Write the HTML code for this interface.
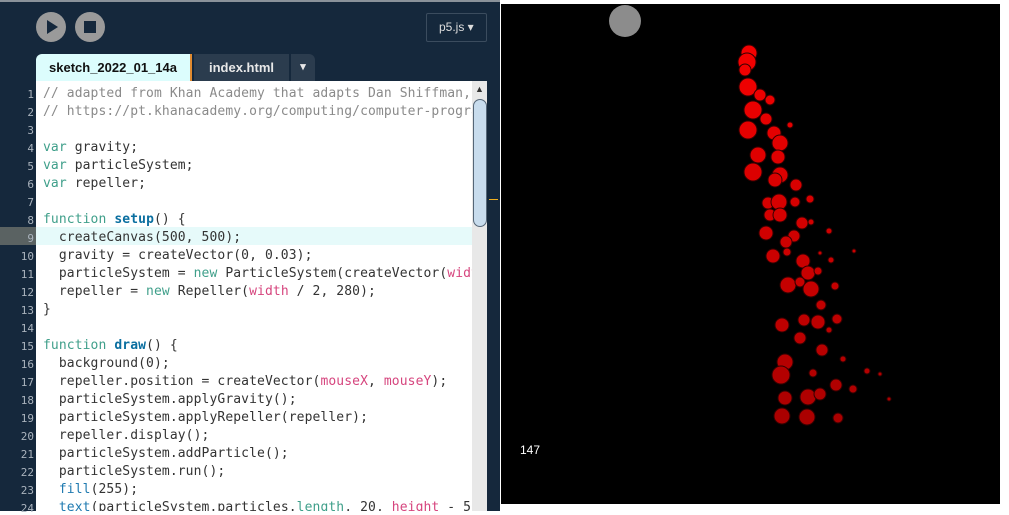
<!DOCTYPE html>
<html><head><meta charset="utf-8"><style>
*{margin:0;padding:0;box-sizing:border-box}
body{width:1009px;height:511px;overflow:hidden;background:#fff;position:relative;font-family:"Liberation Sans",sans-serif}
#ed{position:absolute;left:0;top:0;width:500px;height:511px;background:#15283c}
#topline{position:absolute;left:0;top:0;width:500px;height:2px;background:#8a929a}
.btn{position:absolute;top:12px;width:30px;height:30px;border-radius:50%;background:#9a9a9a}
#sel{position:absolute;left:426px;top:13px;width:61px;height:29px;border:1px solid #3b4c5e;border-radius:2px;color:#ddd;font-size:12px;line-height:27px;padding-left:12px}
.tab{position:absolute;top:54px;height:28px;font-size:13px;font-weight:bold;line-height:27px;text-align:center}
#code{position:absolute;left:36px;top:81px;width:436px;height:430px;background:#fff;overflow:hidden}
#gut{position:absolute;left:0;top:81px;width:36px;height:430px}
.ln{position:absolute;left:0;width:34px;text-align:right;font:11px "DejaVu Sans Mono",monospace;color:#aab3bd}
.l{position:absolute;left:7px;white-space:pre;font:13px/18px "DejaVu Sans Mono",monospace;letter-spacing:0.1px;color:#333}
.c{color:#8a8a8a}.k{color:#3f9f8a}.f{color:#0b6fa0;font-weight:bold}.p{color:#d6457e}.b{color:#1f7ab0}
#sb{position:absolute;left:472px;top:81px;width:15px;height:430px;background:#e8e8e8}
#cv{position:absolute;left:501px;top:4px;width:499px;height:500px;background:#000}
</style></head><body>
<div id="ed">
<div id="topline"></div>
<div class="btn" style="left:36px"><svg width="30" height="30"><path d="M11 8 L22 15 L11 22Z" fill="#15283c"/></svg></div>
<div class="btn" style="left:75px"><svg width="30" height="30"><rect x="9" y="9" width="12" height="12" fill="#15283c"/></svg></div>
<div id="sel">p5.js ▾</div>
<div class="tab" style="left:36px;width:156px;background:#dcfdfd;color:#111;border-radius:6px 0 0 0;border-right:2px solid #e08a30">sketch_2022_01_14a</div>
<div class="tab" style="left:194px;width:95px;background:#2b3c4e;color:#e8e8e8">index.html</div>
<div class="tab" style="left:291px;width:24px;background:#2b3c4e;color:#e8e8e8;border-radius:0 6px 0 0;font-size:11px">▾</div>
<div id="gut"></div>
<div id="code"></div>
<div id="sb"><div style="position:absolute;left:1px;top:18px;width:14px;height:128px;background:#c8dced;border:1px solid #567;border-radius:7px"></div><div style="position:absolute;left:3px;top:3px;font-size:9px;color:#333">▲</div></div>
<div style="position:absolute;left:489px;top:199px;width:9px;height:1px;background:#f0b020"></div>
</div>
<div id="cv">
<svg width="499" height="500" style="position:absolute;left:0;top:0">
<circle cx="124" cy="17" r="16" fill="#8c8c8c"/>
<g id="pp" stroke="#300" stroke-width="1"></g>
<text x="19" y="450" fill="#fff" font-size="12" font-family="Liberation Sans">147</text>
</svg>
</div>
<script>
var L=[
'<span class="c">// adapted from Khan Academy that adapts Dan Shiffman,</span>',
'<span class="c">// https://pt.khanacademy.org/computing/computer-programming</span>',
'',
'<span class="k">var</span> gravity;',
'<span class="k">var</span> particleSystem;',
'<span class="k">var</span> repeller;',
'',
'<span class="k">function</span> <span class="f">setup</span>() {',
'  createCanvas(500, 500);',
'  gravity = createVector(0, 0.03);',
'  particleSystem = <span class="k">new</span> ParticleSystem(createVector(<span class="p">width</span>',
'  repeller = <span class="k">new</span> Repeller(<span class="p">width</span> / 2, 280);',
'}',
'',
'<span class="k">function</span> <span class="f">draw</span>() {',
'  background(0);',
'  repeller.position = createVector(<span class="p">mouseX</span>, <span class="p">mouseY</span>);',
'  particleSystem.applyGravity();',
'  particleSystem.applyRepeller(repeller);',
'  repeller.display();',
'  particleSystem.addParticle();',
'  particleSystem.run();',
'  <span class="b">fill</span>(255);',
'  <span class="b">text</span>(particleSystem.particles.<span class="k">length</span>, 20, <span class="p">height</span> - 50);'];
var c=document.getElementById('code'),g=document.getElementById('gut'),h='',gh='';
L.forEach(function(s,i){var y=2+18*i;
if(i==8){h+='<div style="position:absolute;left:0;top:'+y+'px;width:436px;height:18px;background:#e6fafa"></div>';gh+='<div style="position:absolute;left:0;top:'+y+'px;width:36px;height:18px;background:#5a6262"></div>';}
h+='<div class="l" style="top:'+(y+2)+'px">'+s+'</div>';
gh+='<div class="ln" style="top:'+(y+5)+'px">'+(i+1)+'</div>';});
c.innerHTML=h;g.innerHTML=gh;
var P=[[749,53,8],[747,62,9],[748,87,9],[753,110,9],[766,119,6],[748,130,9],[774,133,7],[780,143,8],[758,155,8],[753,172,9],[778,157,7],[780,175,8],[775,180,7],[796,185,6],[768,203,6],[779,202,8],[795,202,5],[810,199,4],[770,215,6],[780,215,7],[802,223,6],[811,222,3],[766,233,7],[794,236,6],[786,242,6],[829,231,3],[773,256,7],[787,252,4],[803,261,7],[808,273,7],[788,285,8],[800,282,5],[811,289,8],[818,271,4],[831,260,3],[820,253,2],[854,251,2],[835,286,4],[821,305,5],[818,322,7],[804,320,6],[837,319,5],[782,325,7],[800,338,6],[822,350,6],[829,330,3],[843,359,3],[785,362,8],[781,375,9],[813,373,4],[836,385,6],[853,389,4],[867,371,3],[880,374,2],[889,399,2],[785,398,7],[808,397,8],[820,394,6],[782,416,8],[807,417,8],[838,418,5],[745,70,6],[760,95,6],[770,100,5],[790,125,3]];
var s='';P.forEach(function(p){var t=(p[1]-50)/370;var r=Math.round(245-t*75);s+='<circle cx="'+(p[0]-501)+'" cy="'+(p[1]-4)+'" r="'+p[2]+'" fill="rgb('+r+',0,0)"/>';});
document.getElementById('pp').innerHTML=s;
</script>
</body></html>
